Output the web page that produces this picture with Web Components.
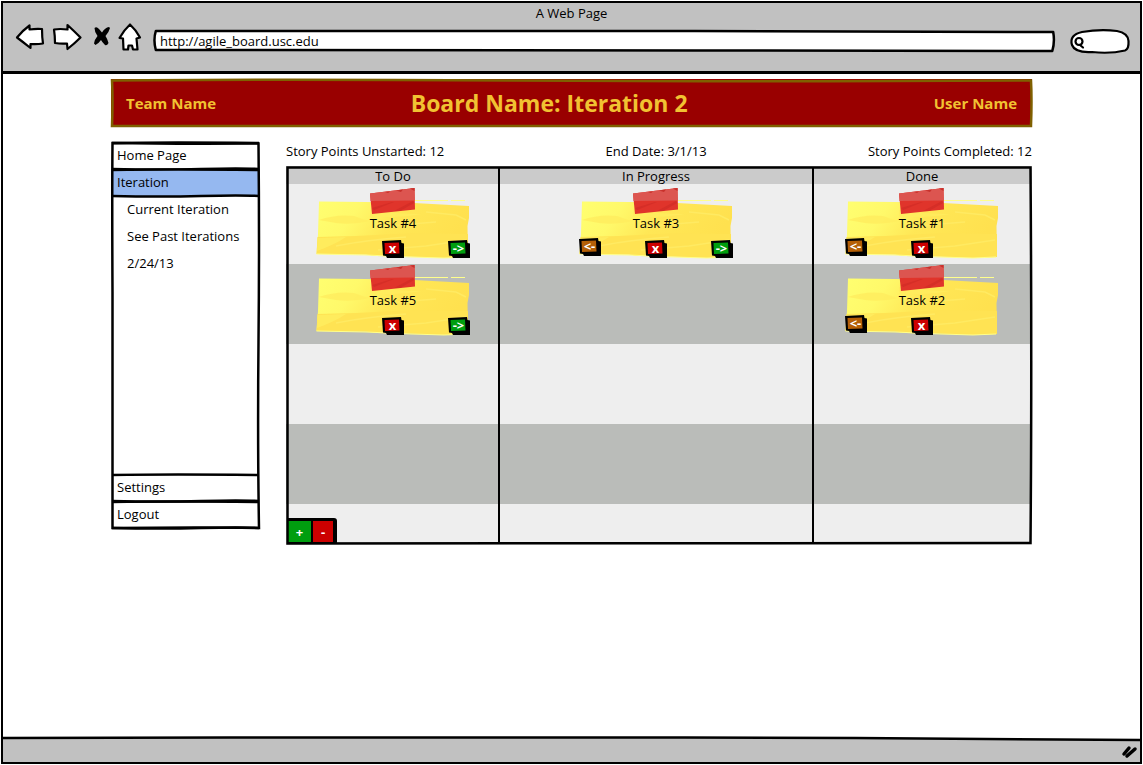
<!DOCTYPE html>
<html lang="en">
<head>
<meta charset="utf-8">
<title>A Web Page</title>
<style>
body { margin: 0; background: #fff; color: #000; font: 13px/18px "Open Sans", "Noto Sans", sans-serif; }
</style>
</head>
<body>
<sketch-browser label="A Web Page" url="http://agile_board.usc.edu">
  <agile-page>
    <board-banner>
      <span slot="team">Team Name</span>
      <span slot="title">Board Name: Iteration 2</span>
      <span slot="user">User Name</span>
    </board-banner>
    <side-menu slot="menu">
      <menu-item>Home Page</menu-item>
      <menu-item selected>Iteration</menu-item>
      <menu-item sub>Current Iteration</menu-item>
      <menu-item sub>See Past Iterations</menu-item>
      <menu-item sub>2/24/13</menu-item>
      <menu-item slot="end">Settings</menu-item>
      <menu-item slot="end">Logout</menu-item>
    </side-menu>
    <board-stats slot="board">
      <span>Story Points Unstarted: 12</span>
      <span>End Date: 3/1/13</span>
      <span>Story Points Completed: 12</span>
    </board-stats>
    <task-board slot="board">
      <board-lane label="To Do">
        <task-card label="Task #4" next></task-card>
        <task-card label="Task #5" next></task-card>
        <lane-tools slot="tools"></lane-tools>
      </board-lane>
      <board-lane label="In Progress">
        <task-card label="Task #3" previous next></task-card>
      </board-lane>
      <board-lane label="Done">
        <task-card label="Task #1" previous></task-card>
        <task-card label="Task #2" previous></task-card>
      </board-lane>
    </task-board>
  </agile-page>
</sketch-browser>

<script>
class ShadowElement extends HTMLElement {
  constructor() {
    super();
    this.attachShadow({ mode: "open" });
  }
  connectedCallback() {
    this.shadowRoot.innerHTML = "<style>*{box-sizing:border-box}" + this.constructor.css + "</style>" + this.html();
  }
}

/* Browser window: title, toolbar, page area and status bar */
customElements.define("sketch-browser", class extends ShadowElement {
  static css = `
    :host { display: block; padding: 1px; }
    .window { display: flex; flex-direction: column; min-height: calc(100vh - 2px); border: 2px solid #000; }
    header { background: #c1c1c1; border-bottom: 3px solid #000; padding: 1px 10px 11px; }
    .title { text-align: center; height: 18px; }
    .bar { display: flex; align-items: center; height: 38px; }
    .nav { display: flex; align-self: flex-start; }
    button { border: 0; padding: 0; background: none; display: block; height: 30px; }
    svg { display: block; }
    .field { position: relative; height: 22px; display: flex; }
    .address { flex: 1; margin: 0 15px 0 11px; }
    .search { width: 60px; height: 25px; }
    .field svg { position: absolute; inset: 0; width: 100%; height: 100%; overflow: visible; }
    path { vector-effect: non-scaling-stroke; }
    input { position: relative; width: 100%; min-width: 0; border: 0; outline: 0; background: none; padding: 0 6px; font: inherit; color: #000; }
    .address input { padding-bottom: 1px; }
    .search input { padding-left: 18px; }
    main { flex: 1; }
    footer { position: relative; height: 26px; display: flex; align-items: center; justify-content: flex-end; padding-right: 1px; }
    .edge { position: absolute; inset: 0; width: 100%; height: 100%; }
    .grip { position: relative; margin-top: 4px; }
  `;
  html() {
    return `
    <div class="window">
      <header>
        <div class="title">${this.getAttribute("label")}</div>
        <div class="bar">
          <div class="nav">
            <button aria-label="Back"><svg width="35" height="30" viewBox="13 22 35 30" fill="#fff" stroke="#000" stroke-width="2.2" stroke-linejoin="round"><path d="M17 37.500Q22 31 29.500 25.500L29.500 29.500Q36 28.500 42 29Q42 37 43 43.500Q37 44.500 30.500 44L30.500 48Q23 42 17 37.500Z"/></svg></button>
            <button aria-label="Forward"><svg width="42" height="30" viewBox="48 22 42 30" fill="#fff" stroke="#000" stroke-width="2.2" stroke-linejoin="round"><path d="M54 29.500Q60 28.500 67.500 29.500L67.500 25Q74 31 80.500 37.500Q74 44 67.500 49L67 43.500Q61 44 55 43Q55 36 54 29.500Z"/></svg></button>
            <button aria-label="Stop"><svg width="26" height="30" viewBox="90 22 26 30" fill="#000"><path d="M94.500 28Q96.500 26 99 29L102 32.500Q105 27.500 109 27L110 28Q109 32 105.500 36Q107.500 39 108.500 43Q107 46 105 45Q102 42 101 40Q99 43 95.500 45L94 43.500Q94.500 39.500 97.500 36Q94.500 32 94.500 28Z"/></svg></button>
            <button aria-label="Home"><svg width="27" height="30" viewBox="116 22 27 30" fill="#fff" stroke="#000" stroke-width="2.2" stroke-linejoin="round"><path d="M130 24.500Q136 30 140 37.500L136.500 38.500L137.500 49.500L133 49.500L132 45.500L128.500 45.500L128 49.500L123.500 49.500L123 38.500L119.500 38Q124 30 130 24.500Z"/></svg></button>
          </div>
          <div class="field address">
            <svg viewBox="0 0 100 22" preserveAspectRatio="none" fill="#fff" stroke="#000" stroke-width="2.5" stroke-linejoin="round"><path d="M.2 1L60 1Q90 1.500 99.800 2Q100 12 99.700 21L60 20.500L.2 20Q-.1 10 .2 1Z"/></svg>
            <input type="text" aria-label="Address" value="${this.getAttribute("url")}">
          </div>
          <div class="field search">
            <svg viewBox="0 0 60 25" fill="#fff" stroke="#000" stroke-width="2.2" stroke-linecap="round"><path d="M12 3Q30 0 47 2Q58 4 58.500 12Q59 20 55 21.500Q40 25 22 23Q5 24 2 16Q-1 6 12 3Z"/><circle cx="9" cy="12.500" r="3.500"/><path d="M10 16L13 18.500"/></svg>
            <input type="search" aria-label="Search">
          </div>
        </div>
      </header>
      <main><slot></slot></main>
      <footer>
        <svg class="edge" viewBox="0 0 100 26" preserveAspectRatio="none"><path d="M0 2L60 1.500L75 2L100 4V26H0Z" fill="#c1c1c1"/><path d="M0 2L20 1.500L60 1.500L75 2L100 4" fill="none" stroke="#000" stroke-width="2.500"/></svg>
        <svg class="grip" width="18" height="18" viewBox="0 0 18 18" stroke="#000" stroke-width="3.500" stroke-linecap="round"><path d="M3 12L8 6M6 14L14 7"/></svg>
      </footer>
    </div>`;
  }
});

/* Page grid: banner on top, menu on the left, board on the right */
customElements.define("agile-page", class extends ShadowElement {
  static css = `
    :host { display: grid; grid-template-columns: 149px minmax(0, 1fr); column-gap: 26px; row-gap: 15px; max-width: 921px; margin: 0 auto; padding-top: 5px; }
    .banner { grid-column: 1 / -1; }
    .board { display: flex; flex-direction: column; gap: 6px; }
  `;
  html() {
    return `<div class="banner"><slot></slot></div>
      <div><slot name="menu"></slot></div>
      <section class="board"><slot name="board"></slot></section>`;
  }
});

customElements.define("board-banner", class extends ShadowElement {
  static css = `
    :host { position: relative; display: grid; grid-template-columns: 283fr 520fr auto; align-items: center; height: 48px; padding: 0 15px; background: #900; color: #f1c232; font-weight: bold; font-size: 15px; box-sizing: border-box; }
    .title { margin: 0; font-size: 23px; line-height: 30px; }
    svg { position: absolute; inset: 0; width: 100%; height: 100%; overflow: visible; }
    path { vector-effect: non-scaling-stroke; }
  `;
  html() {
    return `<svg viewBox="0 0 920 48" preserveAspectRatio="none" fill="none" stroke="#7f6000" stroke-width="2.500"><path d="M1 1.500Q150 0 400 1.500T919 1.500Q920 20 919 47Q700 48 450 47T1 47Q2 20 1 1.500Z"/></svg>
      <slot name="team"></slot><h1 class="title"><slot name="title"></slot></h1><slot name="user"></slot>`;
  }
});

customElements.define("side-menu", class extends ShadowElement {
  static css = `
    :host { display: block; }
    nav { position: relative; display: flex; flex-direction: column; min-height: 387px; }
    .end { margin: auto 0 1px; }
    svg { position: absolute; inset: 0; width: 100%; height: 100%; overflow: visible; pointer-events: none; }
    path { vector-effect: non-scaling-stroke; }
  `;
  html() {
    return `<nav>
      <slot></slot>
      <div class="end"><slot name="end"></slot></div>
      <svg viewBox="0 0 149 387" preserveAspectRatio="none" fill="none" stroke="#000" stroke-width="2.500"><path d="M1.500 1Q60 2 147.500 1.500Q148.500 100 147.500 200T148 386Q90 385 1.500 386Q2 250 1.500 150T1.500 1Z"/></svg>
    </nav>`;
  }
});

customElements.define("menu-item", class extends ShadowElement {
  static css = `
    :host { display: block; }
    a { position: relative; display: block; height: 27px; padding: 4px 6px 5px; color: inherit; text-decoration: none; }
    :host([sub]) a { padding-left: 16px; }
    :host([selected]) a { background: #95b8f0; }
    span { position: relative; }
    svg { position: absolute; inset: 0; width: 100%; height: 100%; overflow: visible; }
    :host([sub]) svg { display: none; }
    path { vector-effect: non-scaling-stroke; }
  `;
  html() {
    return `<a href="#"><svg viewBox="0 0 149 27" preserveAspectRatio="none" fill="none" stroke="#000" stroke-width="2.500"><path d="M1 1Q60 0 148 1M1 27Q50 28 90 27T148 27"/></svg><span><slot></slot></span></a>`;
  }
});

customElements.define("board-stats", class extends ShadowElement {
  static css = `:host { display: flex; justify-content: space-between; gap: 12px; }`;
  html() { return `<slot></slot>`; }
});

/* Three lanes over a striped background */
customElements.define("task-board", class extends ShadowElement {
  static css = `
    :host { position: relative; display: grid; grid-template-columns: 212fr 314fr 216fr; padding: 2px; min-height: 379px; box-sizing: border-box;
      background: linear-gradient(#cbcbcb 18px, transparent 18px), repeating-linear-gradient(#eee 0 80px, #babcb9 80px 160px) 0 18px; }
    svg { position: absolute; inset: 0; width: 100%; height: 100%; overflow: visible; pointer-events: none; }
    path { vector-effect: non-scaling-stroke; }
  `;
  html() {
    return `<svg viewBox="0 0 745 379" preserveAspectRatio="none" fill="none" stroke="#000" stroke-width="2.500"><path d="M1.500 1.500Q300 2 743.500 1.500Q745 200 743.500 377Q400 376 1.500 377.500Z"/></svg><slot></slot>`;
  }
});

customElements.define("board-lane", class extends ShadowElement {
  static css = `
    :host { display: flex; flex-direction: column; align-items: center; border-right: 2px solid #000; }
    :host(:last-of-type) { border-right: 0; }
    h2 { margin: 0; font: inherit; line-height: 16px; }
    .tools { margin-top: auto; align-self: flex-start; }
  `;
  html() {
    return `<h2>${this.getAttribute("label")}</h2><slot></slot><div class="tools"><slot name="tools"></slot></div>`;
  }
});

/* Sticky note held by a strip of red tape */
customElements.define("task-card", class extends ShadowElement {
  static css = `
    :host { position: relative; display: flex; flex-direction: column; width: 154px; height: 77px; padding-top: 30px; box-sizing: border-box; text-align: center; }
    .note { position: absolute; left: 0; top: 0; }
    .name { position: relative; height: 18px; }
    .actions { position: relative; display: grid; grid-template-columns: 1fr 22px 1fr; margin-top: 6px; }
    .remove { grid-column: 2; grid-row: 1; margin-top: 2px; }
    .next { grid-column: 3; grid-row: 1; margin-top: 2px; justify-self: end; }
  `;
  html() {
    return `<svg class="note" width="154" height="77" viewBox="0 0 154 77">
        <defs><linearGradient id="paper" x1="0" y1="0" x2="1" y2=".25"><stop offset="0" stop-color="#ffff70"/><stop offset=".28" stop-color="#fff96a"/><stop offset=".55" stop-color="#ffe756"/><stop offset="1" stop-color="#ffe14f"/></linearGradient></defs>
        <path d="M3 17.500L50 18L98 19L153 22L153 34L151.500 42L152 73L128 74L95 72.500L60 72L50 70.500L.5 70L2 50Z" fill="url(#paper)"/>
        <path d="M1.500 53L40 52L100 49L152 50L152 73L128 74L95 72.500L60 72L50 70.500L.5 70Z" fill="#ffe353"/>
        <path d="M3 36Q20 30 38 32Q48 36 54 37Q36 41 20 39ZM54 26Q80 30 106 30Q80 35 54 32Z" fill="#ffec5e" opacity=".8"/>
        <path d="M1.500 54L30 53Q20 60 1 67Z" fill="#fff062" opacity=".7"/>
        <path d="M20 62Q50 56 90 53M62 66L110 62L150 56M110 28L140 31L150 36M70 42L120 38" fill="none" stroke="#ffea62" stroke-width="1.500"/>
        <path d="M98 16.500L132 16.500M135 16.500L149 16.500M.5 70L50 71L95 73L128 74L151 73" fill="none" stroke="#ffff8c"/>
        <path d="M54 9.500L98.500 4L99 25.500L56 30Z" fill="#e0342b"/>
        <path d="M54 9.500L98.500 4L98.800 16.500L54.500 17Z" fill="#dc5550"/>
        <path d="M69 8L74 7.500L72 9ZM80 6.500L87 5.500L85 8ZM94 4.500L98.500 4L98.500 7Z" fill="#c8302b"/>
        <path d="M56 24L76 18L78 18L58 26ZM78 27L97 17L98 19L84 27Z" fill="#d52e27"/>
      </svg>
      <div class="name">${this.getAttribute("label")}</div>
      <div class="actions">
        ${this.hasAttribute("previous") ? '<sketch-button class="prev" label="&lt;-" style="--fill:#b45f06"></sketch-button>' : ""}
        <sketch-button class="remove" label="x" style="--fill:#c00"></sketch-button>
        ${this.hasAttribute("next") ? '<sketch-button class="next" label="-&gt;" style="--fill:#009e0f"></sketch-button>' : ""}
      </div>`;
  }
});

/* Small push button with a thick drop shadow */
customElements.define("sketch-button", class extends ShadowElement {
  static css = `
    :host { display: block; width: 22px; height: 18px; }
    button { position: relative; display: block; width: 100%; height: 100%; border: 0; padding: 1px 1px 3px 0; background: none; color: #fff; font: bold 13px/14px "Open Sans", "Noto Sans", sans-serif; white-space: nowrap; }
    svg { position: absolute; inset: 0; width: 100%; height: 100%; }
    span { position: relative; }
  `;
  html() {
    return `<button><svg viewBox="0 0 22 18" preserveAspectRatio="none"><path d="M0 1L19 0L19.500 3L22 3.500L22 18L5 18L4 16L1 15.500Z"/><path d="M2.500 3L17 2.500L17.500 13.500L3 14Z" style="fill:var(--fill)"/></svg><span>${this.getAttribute("label").replace("<", "&lt;")}</span></button>`;
  }
});

customElements.define("lane-tools", class extends ShadowElement {
  static css = `
    :host { display: flex; background: #000; padding: 3px 4px 1px 0; gap: 2px; border-radius: 0 3px 0 0; }
    button { width: 23px; height: 21px; padding: 0; border: 0; color: #fff; font: bold 13px/20px "Open Sans", "Noto Sans", sans-serif; }
    .add { background: #009e0f; }
    .remove { background: #c00; width: 20px; }
  `;
  html() { return `<button class="add">+</button><button class="remove">-</button>`; }
});
</script>
</body>
</html>
